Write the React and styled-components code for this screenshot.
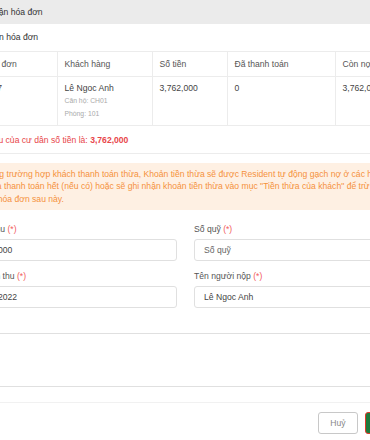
import React from 'react';
import styled, { createGlobalStyle } from 'styled-components';

const GlobalStyle = createGlobalStyle`
  html, body {
    margin: 0;
    overflow: hidden;
    background: #fff;
  }
  body {
    font-family: "Liberation Sans", Arial, sans-serif;
    font-size: 8.6px;
    color: #444;
  }
`;

// the modal is wider than the window, its left and right edges are cut
const Modal = styled.div`
  width: 467px;
  margin-left: -48px;
  background: #fff;
`;

const Header = styled.div`
  height: 24px;
  display: flex;
  align-items: center;
  padding: 0 20px;
  background: #ebebeb;
  color: #333;
  font-size: 8.6px;
`;

const Body = styled.div`
  padding: 7px 12px 15px;
`;

const SectionTitle = styled.div`
  padding-left: 4px;
  line-height: 12px;
  margin-bottom: 8px;
  color: #333;
`;

const Table = styled.div`
  display: grid;
  grid-template-columns: 94px 95px 75px 108px 1fr;
  border-top: 1px solid #ececec;
  border-bottom: 1px solid #ececec;
`;

const Cell = styled.div`
  padding: 0 6.5px;
  border-right: 1px solid #ececec;
  white-space: nowrap;
  overflow: hidden;
  &:nth-child(5n) {
    border-right: 0;
  }
`;

const HeadCell = styled(Cell)`
  height: 24px;
  display: flex;
  align-items: center;
  border-bottom: 1px solid #ececec;
  color: #555;
`;

const DataCell = styled(Cell)`
  height: 48px;
  padding-top: 5px;
  box-sizing: border-box;
  line-height: 12px;
`;

const SubText = styled.div`
  font-size: 6.8px;
  line-height: 13px;
  color: #aaa;
`;

const Total = styled.div`
  margin-top: 8px;
  line-height: 12px;
  color: #e8464a;
  b {
    font-weight: bold;
  }
`;

const Divider = styled.div`
  height: 1px;
  background: #ececec;
  margin-top: 7px;
`;

const Alert = styled.div`
  margin-top: 9px;
  padding: 5px 12px 5px 18px;
  background: #fef0e3;
  color: #f5913c;
  line-height: 12.3px;
  white-space: nowrap;
  overflow: hidden;
`;

const FormGrid = styled.div`
  display: grid;
  grid-template-columns: 1fr 1fr;
  column-gap: 17px;
  row-gap: 9px;
  margin-top: 13px;
`;

const Label = styled.div`
  line-height: 12px;
  margin-bottom: 4px;
  color: #555;
  span {
    color: #f25c5c;
  }
`;

const Input = styled.div`
  height: 22px;
  box-sizing: border-box;
  display: flex;
  align-items: center;
  padding: 0 9px;
  border: 1px solid #e0e0e0;
  border-radius: 3px;
  color: ${p => (p.$placeholder ? '#666' : '#444')};
  white-space: nowrap;
`;

const TextArea = styled.div`
  margin-top: 25px;
  height: 54px;
  box-sizing: border-box;
  border: 1px solid #e0e0e0;
  border-radius: 3px;
`;

const Footer = styled.div`
  display: flex;
  justify-content: flex-end;
  gap: 7px;
  padding: 9px 12px;
  border-top: 1px solid #f1f1f1;
`;

const Button = styled.button`
  width: ${p => p.$width}px;
  height: 22px;
  padding: 0;
  border-radius: 3px;
  font-family: inherit;
  font-size: 8.6px;
  cursor: pointer;
  background: ${p => (p.$primary ? '#1f7a3d' : '#fff')};
  color: ${p => (p.$primary ? '#fff' : '#888')};
  border: 1px solid ${p => (p.$primary ? '#e2372b' : '#c8c8c8')};
`;

const Field = ({ label, value, placeholder }) => (
  <div>
    <Label>
      {label} <span>(*)</span>
    </Label>
    <Input $placeholder={!value}>{value || placeholder}</Input>
  </div>
);

const App = () => (
  <>
    <GlobalStyle />
    <Modal>
      <Header>Xác nhận hóa đơn</Header>

      <Body>
        <SectionTitle>Thông tin hóa đơn</SectionTitle>

        <Table>
          <HeadCell>Mã hóa đơn</HeadCell>
          <HeadCell>Khách hàng</HeadCell>
          <HeadCell>Số tiền</HeadCell>
          <HeadCell>Đã thanh toán</HeadCell>
          <HeadCell>Còn nợ</HeadCell>

          <DataCell>HD0007</DataCell>
          <DataCell>
            Lê Ngoc Anh
            <SubText>Căn hộ: CH01</SubText>
            <SubText>Phòng: 101</SubText>
          </DataCell>
          <DataCell>3,762,000</DataCell>
          <DataCell>0</DataCell>
          <DataCell>3,762,000</DataCell>
        </Table>

        <Total>
          Khoản thu của cư dân số tiền là: <b>3,762,000</b>
        </Total>
        <Divider />

        <Alert>
          Trong trường hợp khách thanh toán thừa, Khoản tiền thừa sẽ được Resident tự động gạch nợ ở các hóa đơn
          <br />
          chưa thanh toán hết (nếu có) hoặc sẽ ghi nhận khoản tiền thừa vào mục "Tiền thừa của khách" để trừ vào
          <br />
          các hóa đơn sau này.
        </Alert>

        <FormGrid>
          <Field label="Số tiền thu" value="3,762,000" />
          <Field label="Số quỹ" placeholder="Số quỹ" />
          <Field label="Thời gian thu" value="15/03/2022" />
          <Field label="Tên người nộp" value="Lê Ngoc Anh" />
        </FormGrid>

        <TextArea />
      </Body>

      <Footer>
        <Button $width={40}>Huỷ</Button>
        <Button $width={42} $primary>Lưu</Button>
      </Footer>
    </Modal>
  </>
);

export default App;
